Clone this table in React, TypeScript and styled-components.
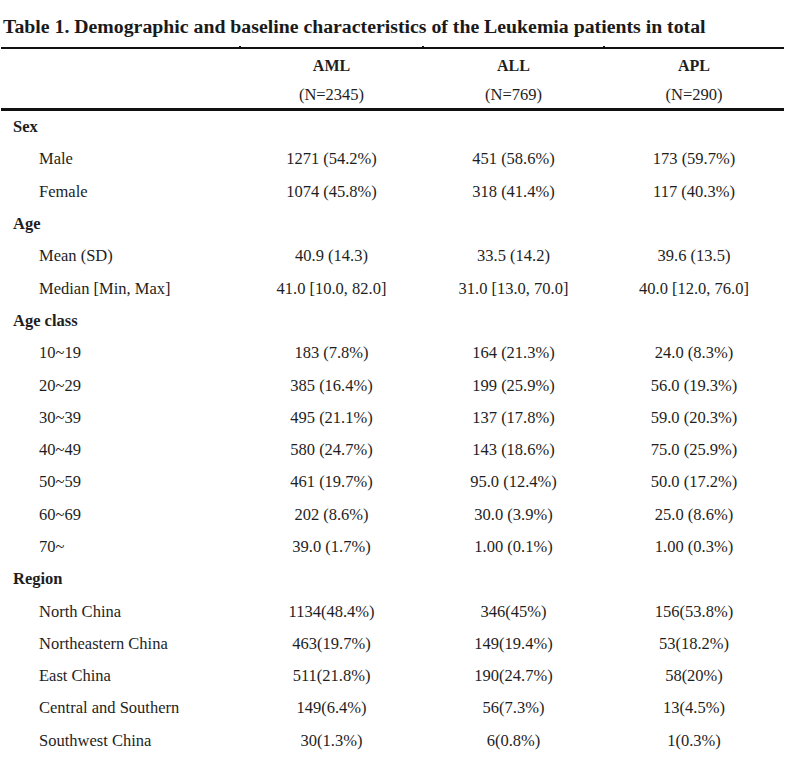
import React from "react";
import styled, { createGlobalStyle } from "styled-components";

const Global = createGlobalStyle`
  html, body { margin: 0; padding: 0; background: #ffffff; }
  body { font-family: "Liberation Serif", "Times New Roman", serif; color: #1e1e1e; }
`;

const Page = styled.div`
  width: 787px;
  height: 758px;
  overflow: hidden;
  padding: 0 0 0 1px;
  box-sizing: border-box;
`;

const Title = styled.h1`
  margin: 0;
  padding: 15px 0 0 2px;
  height: 47px;
  box-sizing: border-box;
  font-size: 19.8px;
  line-height: 22px;
  font-weight: bold;
  color: #1a1a1a;
  white-space: nowrap;
`;

const Table = styled.div`
  display: grid;
  grid-template-columns: 239px 183px 181px 180px;
  width: 783px;
`;

const HeadCell = styled.div<{ $first?: boolean }>`
  position: relative;
  border-top: 2px solid #111;
  border-bottom: 3px solid #111;
  height: 64px;
  box-sizing: border-box;
  display: flex;
  flex-direction: column;
  align-items: center;
  justify-content: flex-start;
  padding-top: 7px;
  font-size: 16px;
  &::before {
    content: "";
    display: ${(p) => (p.$first ? "none" : "block")};
    position: absolute;
    left: -1px;
    top: -3px;
    width: 2px;
    height: 2px;
    background: #111;
  }
`;

const Group = styled.div`
  font-weight: bold;
  line-height: 20px;
  height: 24px;
`;

const Count = styled.div`
  line-height: 20px;
  font-size: 16.5px;
  padding-top: 5px;
`;

const Label = styled.div<{ $section?: boolean }>`
  height: 32.3px;
  display: flex;
  align-items: center;
  padding-left: ${(p) => (p.$section ? "12px" : "38px")};
  font-size: 16.5px;
  font-weight: ${(p) => (p.$section ? "bold" : "normal")};
  white-space: nowrap;
`;

const Value = styled.div`
  height: 32.3px;
  display: flex;
  align-items: center;
  justify-content: center;
  font-size: 16.5px;
  white-space: nowrap;
`;

type Row = { label: string; section?: boolean; v?: [string, string, string] };

const rows: Row[] = [
  { label: "Sex", section: true },
  { label: "Male", v: ["1271 (54.2%)", "451 (58.6%)", "173 (59.7%)"] },
  { label: "Female", v: ["1074 (45.8%)", "318 (41.4%)", "117 (40.3%)"] },
  { label: "Age", section: true },
  { label: "Mean (SD)", v: ["40.9 (14.3)", "33.5 (14.2)", "39.6 (13.5)"] },
  { label: "Median [Min, Max]", v: ["41.0 [10.0, 82.0]", "31.0 [13.0, 70.0]", "40.0 [12.0, 76.0]"] },
  { label: "Age class", section: true },
  { label: "10~19", v: ["183 (7.8%)", "164 (21.3%)", "24.0 (8.3%)"] },
  { label: "20~29", v: ["385 (16.4%)", "199 (25.9%)", "56.0 (19.3%)"] },
  { label: "30~39", v: ["495 (21.1%)", "137 (17.8%)", "59.0 (20.3%)"] },
  { label: "40~49", v: ["580 (24.7%)", "143 (18.6%)", "75.0 (25.9%)"] },
  { label: "50~59", v: ["461 (19.7%)", "95.0 (12.4%)", "50.0 (17.2%)"] },
  { label: "60~69", v: ["202 (8.6%)", "30.0 (3.9%)", "25.0 (8.6%)"] },
  { label: "70~", v: ["39.0 (1.7%)", "1.00 (0.1%)", "1.00 (0.3%)"] },
  { label: "Region", section: true },
  { label: "North China", v: ["1134(48.4%)", "346(45%)", "156(53.8%)"] },
  { label: "Northeastern China", v: ["463(19.7%)", "149(19.4%)", "53(18.2%)"] },
  { label: "East China", v: ["511(21.8%)", "190(24.7%)", "58(20%)"] },
  { label: "Central and Southern", v: ["149(6.4%)", "56(7.3%)", "13(4.5%)"] },
  { label: "Southwest China", v: ["30(1.3%)", "6(0.8%)", "1(0.3%)"] },
];

const groups: [string, string][] = [
  ["AML", "(N=2345)"],
  ["ALL", "(N=769)"],
  ["APL", "(N=290)"],
];

export default function App() {
  return (
    <Page>
      <Global />
      <Title>Table 1. Demographic and baseline characteristics of the Leukemia patients in total</Title>
      <Table>
        <HeadCell $first />
        {groups.map(([g, n]) => (
          <HeadCell key={g}>
            <Group>{g}</Group>
            <Count>{n}</Count>
          </HeadCell>
        ))}
        {rows.map((r) => (
          <React.Fragment key={r.label}>
            <Label $section={r.section}>{r.label}</Label>
            <Value>{r.v ? r.v[0] : ""}</Value>
            <Value>{r.v ? r.v[1] : ""}</Value>
            <Value>{r.v ? r.v[2] : ""}</Value>
          </React.Fragment>
        ))}
      </Table>
    </Page>
  );
}
